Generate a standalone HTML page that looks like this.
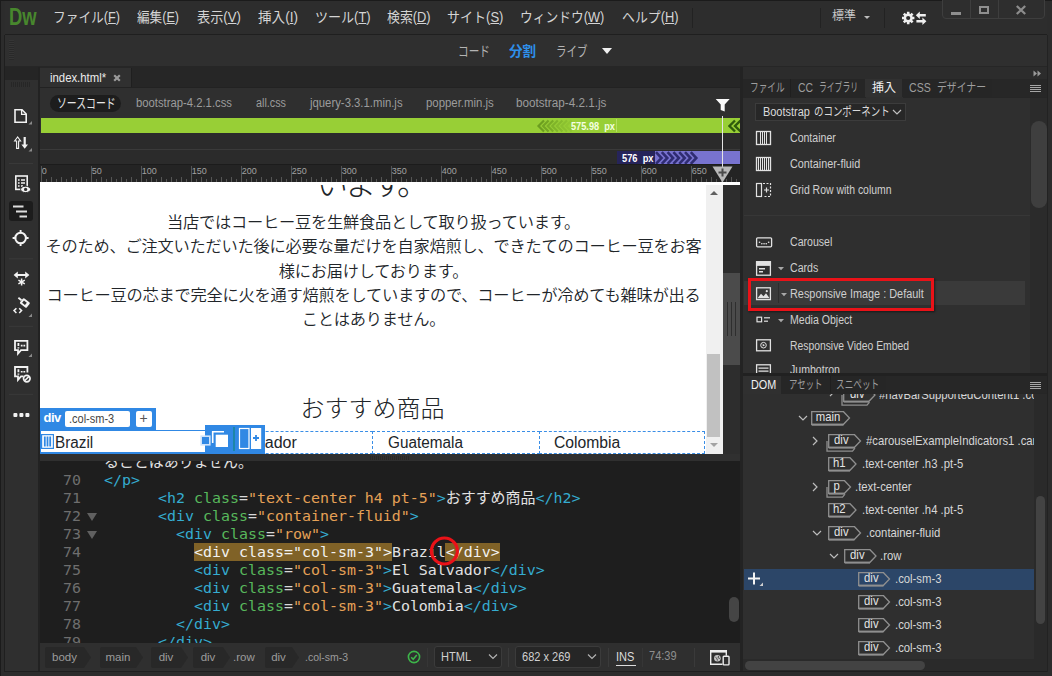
<!DOCTYPE html>
<html lang="ja">
<head>
<meta charset="utf-8">
<title>Dreamweaver</title>
<style>
*{box-sizing:border-box;margin:0;padding:0}
html,body{width:1052px;height:676px;overflow:hidden;background:#2c2c2c}
body{position:relative;font-family:"Liberation Sans","Noto Sans CJK JP",sans-serif;font-size:12px;color:#c8c8c8}
.a{position:absolute}
.t{position:absolute;white-space:nowrap;line-height:1}
.n{display:inline-block;transform-origin:0 50%}
/* ---------- frame ---------- */
#frame{left:0;top:0;width:1052px;height:676px;border-left:1px solid #1b1b1b;border-top:1px solid #1b1b1b;background:#2c2c2c}
#menubar{left:5px;top:1px;width:1042px;height:33px;background:#2d2d2d}
#toolbar{left:5px;top:35px;width:1042px;height:32px;background:#2f2f2f}
/* ---------- left toolbar ---------- */
#ltool{left:5px;top:67px;width:33px;height:604px;background:#2f2f2f}
/* ---------- document ---------- */
#doc{left:40px;top:67px;width:700px;height:604px;background:#2f2f2f}
/* ---------- right panels ---------- */
#rpanel{left:743px;top:67px;width:304px;height:604px;background:#2f2f2f}
.mi{top:10px;font-size:14px;color:#d4d4d4}
.rf{top:97px;font-size:12px;color:#9c9c9c}
.ins{font-size:12px;color:#cfcfcf}
.code{font-family:"DejaVu Sans Mono","Liberation Mono","Noto Sans CJK JP",monospace;font-size:14.95px;line-height:18px;white-space:pre;color:#dcdcdc}
.ln{color:#6e6e6e}
.tg{color:#35acd0}.at{color:#58b85c}.st{color:#e6a156}.eq{color:#d8d8d8}.tx{color:#e2e2e2}
.hl{background:#806227;color:#f2f2f2}
.hl span{color:#f2f2f2}
.lv{color:#212529;font-family:"Liberation Sans","Noto Sans CJK JP",sans-serif}
.sb{font-size:11.500px;color:#9c9c9c}
.dt{font-size:13px;color:#e4e4e4}
.dc{font-size:13px;color:#d6d6d6}
</style>
</head>
<body>
<div class="a" id="frame"></div>
<div class="a" id="menubar"></div>
<div class="a" id="toolbar"></div>

<!-- ===== menu bar ===== -->
<div class="t" style="left:9px;top:6px;font-size:23px;font-weight:bold;color:#48872d"><span class="n" style="transform:scaleX(.80)">Dw</span></div>
<div class="t mi" style="left:53px"><span class="n" style="transform:scaleX(.907)">ファイル(<u>F</u>)</span></div>
<div class="t mi" style="left:137px"><span class="n" style="transform:scaleX(.90)">編集(<u>E</u>)</span></div>
<div class="t mi" style="left:197px"><span class="n" style="transform:scaleX(.94)">表示(<u>V</u>)</span></div>
<div class="t mi" style="left:258px"><span class="n" style="transform:scaleX(.97)">挿入(<u>I</u>)</span></div>
<div class="t mi" style="left:315px"><span class="n" style="transform:scaleX(.93)">ツール(<u>T</u>)</span></div>
<div class="t mi" style="left:387px"><span class="n" style="transform:scaleX(.92)">検索(<u>D</u>)</span></div>
<div class="t mi" style="left:447px"><span class="n" style="transform:scaleX(.93)">サイト(<u>S</u>)</span></div>
<div class="t mi" style="left:520px"><span class="n" style="transform:scaleX(.91)">ウィンドウ(<u>W</u>)</span></div>
<div class="t mi" style="left:622px"><span class="n" style="transform:scaleX(.92)">ヘルプ(<u>H</u>)</span></div>
<div class="a" style="left:692px;top:8px;width:1px;height:20px;background:#222"></div>
<div class="a" style="left:820px;top:8px;width:1px;height:20px;background:#222"></div>
<div class="a" style="left:884px;top:8px;width:1px;height:20px;background:#222"></div>
<div class="t" style="left:832px;top:10px;font-size:12px;color:#c8c8c8">標準</div>
<div class="a" style="left:864px;top:16px;width:0;height:0;border-left:3px solid transparent;border-right:3px solid transparent;border-top:3px solid #bdbdbd"></div>
<svg class="a" style="left:900px;top:10px" width="28" height="16" viewBox="0 0 28 16">
 <g stroke="#efefef" stroke-width="2.600"><path d="M8.200 1.800v12.400M2 8h12.400M3.800 3.600l8.800 8.800M12.600 3.600l-8.800 8.800"/></g>
 <circle cx="8.200" cy="8" r="4.500" fill="#efefef"/>
 <circle cx="8.200" cy="8" r="2.100" fill="#2d2d2d"/>
 <path d="M15.800 5.200l4-3.700v2.500h6v2.400h-6v2.500z" fill="#efefef"/>
 <path d="M26.400 11.200l-4-3.700v2.500h-6v2.400h6v2.500z" fill="#efefef"/>
</svg>
<!-- window buttons -->
<div class="a" style="left:942px;top:-2px;width:103px;height:21px;border:1px solid #3e3e3e;border-radius:0 0 4px 4px;background:#2e2e2e"></div>
<div class="a" style="left:970px;top:0;width:1px;height:18px;background:#3e3e3e"></div>
<div class="a" style="left:998px;top:0;width:1px;height:18px;background:#3e3e3e"></div>
<div class="a" style="left:951px;top:12px;width:10px;height:3px;background:#8f8f8f"></div>
<div class="a" style="left:979px;top:6px;width:10px;height:8px;border:2px solid #8f8f8f"></div>
<svg class="a" style="left:1015px;top:5px" width="12" height="10" viewBox="0 0 12 10"><path d="M1.800 1l8.400 8M10.200 1l-8.400 8" stroke="#8c8c8c" stroke-width="2.300" fill="none"/></svg>
<div class="a" style="left:5px;top:34px;width:1042px;height:1px;background:#1f1f1f"></div>
<!-- ===== toolbar ===== -->
<div class="a" style="left:5px;top:66px;width:1042px;height:1px;background:#262626"></div>
<div class="a" style="left:9px;top:40px;width:5px;height:20px;background:repeating-linear-gradient(to bottom,#353535 0 1px,#292929 1px 2px)"></div>
<div class="t" style="left:458px;top:43.500px;font-size:14px;color:#b4b4b4"><span class="n" style="transform:scaleX(.76)">コード</span></div>
<div class="t" style="left:509px;top:43.500px;font-size:14px;color:#2e8fea;font-weight:bold"><span class="n" style="transform:scaleX(.97)">分割</span></div>
<div class="t" style="left:556px;top:43.500px;font-size:14px;color:#b4b4b4"><span class="n" style="transform:scaleX(.75)">ライブ</span></div>
<div class="a" style="left:602px;top:48px;width:0;height:0;border-left:5px solid transparent;border-right:5px solid transparent;border-top:6px solid #f0f0f0"></div>
<div class="a" id="ltool"></div>

<!-- ===== left toolbar ===== -->
<div class="a" style="left:5px;top:67px;width:33px;height:13px;background:#252525"></div>
<div class="a" style="left:38px;top:67px;width:2px;height:604px;background:#222"></div>
<div class="a" style="left:4px;top:35px;width:1px;height:637px;background:#1f1f1f"></div>
<div class="a" style="left:11px;top:82px;width:20px;height:5px;background:repeating-linear-gradient(to right,#262626 0 1px,#2f2f2f 1px 2px)"></div>
<svg class="a" style="left:5px;top:100px" width="33" height="330" viewBox="0 0 33 330" fill="none" stroke="#f2f2f2" stroke-width="1.6">
 <!-- new file y 109..122 => local 9..22 -->
 <path d="M10 9.8h7l4.2 4.2v8.2H10z"/><path d="M16.6 9.8v4.6h4.6" stroke-width="1.3"/>
 <path d="M27 24.5v-3.5l-3.5 3.5z" fill="#8a8a8a" stroke="none"/>
 <!-- up/down arrows y 136..149 => local 36..49 -->
 <path d="M12.6 37l-3 4h2v7.4h2V41h2z" stroke-width="1.1"/>
 <path d="M18.6 37h2.2v7.5h2.2l-3.3 4.3l-3.3-4.3h2.2z" fill="#f2f2f2" stroke="none"/>
 <path d="M27 51.5v-3.5l-3.5 3.5z" fill="#8a8a8a" stroke="none"/>
 <path d="M4 63.5h24" stroke="#393939" stroke-width="1"/>
 <!-- preview icon y 175..192 => local 75..92 -->
 <rect x="10.8" y="76" width="11.4" height="13.4"/>
 <path d="M13 80h1.6M16 80h4M13 83h1.6M16 83h4M13 86h1.6M16 86h2" stroke-width="1.3"/>
 <ellipse cx="20.6" cy="89.4" rx="5" ry="3.2" fill="#f2f2f2" stroke="#2f2f2f" stroke-width="1"/>
 <circle cx="20.6" cy="89.4" r="1.6" fill="#2f2f2f" stroke="none"/>
 <!-- active button y 201..221 => local 101..121 -->
 <rect x="4" y="101" width="24" height="20" rx="3" fill="#1c1c1c" stroke="none"/>
 <path d="M8 106.500h10.500M11 111.500h11M14.500 116.500h7.500" stroke-width="1.900" stroke="#dedede"/>
 <!-- crosshair y 231..245 => 131..145, centre 15.5,138 -->
 <circle cx="15.600" cy="138" r="5.300" stroke-width="2"/>
 <path d="M15.600 130v3.600M15.600 142.400v3.600M7.600 138h3.600M20 138h3.600" stroke-width="1.900"/>
 <path d="M4 158.8h24" stroke="#393939" stroke-width="1"/>
 <!-- expand all y 271..285 => 171..185 -->
 <path d="M11 175h11" stroke-width="2"/><path d="M12.800 171.400l-4.200 3.600l4.200 3.600zM20.200 171.400l4.200 3.600l-4.200 3.600z" fill="#f2f2f2" stroke="none"/>
 <path d="M16.600 178.400v7.200M13.400 180.200l6.400 3.600M19.800 180.200l-6.400 3.600" stroke-width="1.500"/>
 <!-- format / paint y 298..314 => 198..214 -->
 <g transform="rotate(38 20 203)"><rect x="15.600" y="199.800" width="8.600" height="6.600" rx="1.200" fill="#f2f2f2" stroke="none"/><rect x="17.600" y="201.600" width="3.600" height="3" fill="#2f2f2f" stroke="none"/><path d="M15.600 203h-4" stroke-width="1.800"/></g>
 <path d="M11.400 208.200l-2.400 2.400l2.400 2.400M14.200 208.200l2.400 2.400l-2.400 2.400" stroke-width="1.500"/>
 <path d="M27 217v-3.500l-3.500 3.500z" fill="#8a8a8a" stroke="none"/>
 <path d="M4 226.400h24" stroke="#393939" stroke-width="1"/>
 <!-- comment y 340..354 => 240..254 -->
 <path d="M10 240.800h12.400v9.400h-6.400l-3 3.400v-3.400h-3z" stroke-width="1.800"/>
 <path d="M13.400 243v3M13.400 247.200v1.400" stroke-width="1.800"/><path d="M15.800 245.600h1.800M18.400 245.600h1.800" stroke-width="1.600"/>
 <path d="M27 257v-3.500l-3.500 3.500z" fill="#8a8a8a" stroke="none"/>
 <!-- comment blocked y 367..382 => 267..282 -->
 <path d="M18.500 276.400h-2.500l-3 3.400v-3.400h-3v-9.400h12.400v5.500" stroke-width="1.800"/>
 <path d="M13.400 269.200v3M13.400 273.400v1.400" stroke-width="1.800"/><path d="M15.800 271.800h1.800M18.400 271.800h1.800" stroke-width="1.600"/>
 <circle cx="21.800" cy="278.600" r="3.300" stroke-width="1.700" fill="#2f2f2f"/><path d="M19.600 280.800l4.400-4.400" stroke-width="1.600"/>
 <path d="M4 294.400h24" stroke="#393939" stroke-width="1"/>
 <!-- ellipsis y 413..417 -->
 <rect x="8.400" y="313" width="4" height="4" rx="1" fill="#f2f2f2" stroke="none"/><rect x="14.400" y="313" width="4" height="4" rx="1" fill="#f2f2f2" stroke="none"/><rect x="20.400" y="313" width="4" height="4" rx="1" fill="#f2f2f2" stroke="none"/>
</svg>
<div class="a" id="doc"></div>

<!-- ===== document tabs ===== -->
<div class="a" style="left:40px;top:67px;width:700px;height:21px;background:#262626"></div>
<div class="a" style="left:40px;top:68px;width:92px;height:19px;background:#303030;border-right:1px solid #1f1f1f"></div>
<div class="a" style="left:40px;top:87px;width:700px;height:1px;background:#222"></div>
<div class="t" style="left:50px;top:72px;font-size:12px;color:#ececec"><span class="n" style="transform:scaleX(.945)">index.html*</span></div>
<svg class="a" style="left:113px;top:74px" width="8" height="8" viewBox="0 0 8 8"><path d="M1.200 1.200l5.600 5.600M6.800 1.200l-5.600 5.600" stroke="#9a9a9a" stroke-width="2.200"/></svg>
<!-- related files -->
<div class="a" style="left:50px;top:95px;width:71px;height:17px;border-radius:9px;background:#1d1d1d"></div>
<div class="t" style="left:56.500px;top:96.500px;font-size:13.500px;color:#e6e6e6"><span class="n" style="transform:scaleX(.73)">ソースコード</span></div>
<div class="t rf" style="left:136px"><span class="n" style="transform:scaleX(.94)">bootstrap-4.2.1.css</span></div>
<div class="t rf" style="left:256px"><span class="n" style="transform:scaleX(.90)">all.css</span></div>
<div class="t rf" style="left:310px"><span class="n" style="transform:scaleX(.944)">jquery-3.3.1.min.js</span></div>
<div class="t rf" style="left:426px"><span class="n" style="transform:scaleX(.95)">popper.min.js</span></div>
<div class="t rf" style="left:516px"><span class="n" style="transform:scaleX(.975)">bootstrap-4.2.1.js</span></div>
<svg class="a" style="left:714px;top:97px" width="18" height="16" viewBox="0 0 18 16"><path d="M1.700 2h14l-5 5.400v7.200l-4-1.500v-5.700z" fill="#fafafa"/></svg>
<!-- media query bars -->
<div class="a" style="left:41px;top:118px;width:699px;height:15px;background:#98cf36"></div>
<svg class="a" style="left:536px;top:119px" width="40" height="14" viewBox="0 0 40 14" fill="none" stroke="#6c9e20" stroke-width="2.200"><path d="M8.0 1.500l-5.500 5.500l5.500 5.500" opacity="1"/><path d="M12.6 1.500l-5.500 5.500l5.500 5.500" opacity="0.85"/><path d="M17.2 1.500l-5.500 5.500l5.500 5.500" opacity="0.7"/><path d="M21.8 1.500l-5.500 5.500l5.500 5.500" opacity="0.55"/><path d="M26.4 1.500l-5.500 5.500l5.500 5.500" opacity="0.4"/><path d="M31.0 1.500l-5.500 5.500l5.500 5.500" opacity="0.28"/><path d="M35.6 1.500l-5.500 5.500l5.500 5.500" opacity="0.16"/></svg>
<div class="t" style="left:571px;top:121px;font-size:10.500px;color:#f4ffe0;font-weight:bold"><span class="n" style="transform:scaleX(.875)">575.98&nbsp; px</span></div>
<div class="a" style="left:616px;top:119px;width:1px;height:13px;background:#b4de62"></div>
<svg class="a" style="left:728px;top:119px" width="12" height="14" viewBox="0 0 12 14" fill="none" stroke="#2f5c0c" stroke-width="2.400"><path d="M7 1.500l-5.500 5.500l5.500 5.500M12.500 1.500l-5.500 5.500l5.500 5.500"/></svg>
<div class="a" style="left:40px;top:133px;width:700px;height:17px;background:#2b2b2b"></div>
<div class="a" style="left:40px;top:149px;width:700px;height:1px;background:#3a3a3a"></div>
<div class="a" style="left:40px;top:150px;width:700px;height:15px;background:#2b2b2b"></div>
<div class="a" style="left:617px;top:151px;width:123px;height:14px;background:#7873cf"></div>
<div class="a" style="left:617px;top:151px;width:38px;height:14px;background:#26245a"></div>
<svg class="a" style="left:655px;top:151px" width="50" height="14" viewBox="0 0 50 14" fill="none" stroke="#2f2c72" stroke-width="2.600"><path d="M1.0 1.200l5.500 5.800l-5.500 5.800" /><path d="M6.8 1.200l5.500 5.800l-5.500 5.800" /><path d="M12.6 1.200l5.500 5.800l-5.500 5.800" /><path d="M18.4 1.200l5.500 5.800l-5.500 5.800" /><path d="M24.2 1.200l5.500 5.800l-5.500 5.800" /><path d="M30.0 1.200l5.500 5.800l-5.500 5.800" /><path d="M35.8 1.200l5.500 5.800l-5.500 5.800" /></svg>
<div class="t" style="left:622px;top:153px;font-size:10.500px;color:#ffffff;font-weight:bold"><span class="n" style="transform:scaleX(.885)">576&nbsp; px</span></div>
<!-- ruler -->
<svg class="a" style="left:40px;top:165px" width="700" height="17" viewBox="0 0 700 17"><rect width="700" height="17" fill="#242424"/><path d="M1.5 1v16M6.5 14v3M11.5 12v5M16.5 14v3M21.5 12v5M26.5 14v3M31.5 12v5M36.5 14v3M41.5 12v5M46.5 14v3M51.5 1v16M56.5 14v3M61.5 12v5M66.5 14v3M71.5 12v5M76.5 14v3M81.5 12v5M86.5 14v3M91.5 12v5M96.5 14v3M101.5 1v16M106.5 14v3M111.5 12v5M116.5 14v3M121.5 12v5M126.5 14v3M131.5 12v5M136.5 14v3M141.5 12v5M146.5 14v3M151.5 1v16M156.5 14v3M161.5 12v5M166.5 14v3M171.5 12v5M176.5 14v3M181.5 12v5M186.5 14v3M191.5 12v5M196.5 14v3M201.5 1v16M206.5 14v3M211.5 12v5M216.5 14v3M221.5 12v5M226.5 14v3M231.5 12v5M236.5 14v3M241.5 12v5M246.5 14v3M251.5 1v16M256.5 14v3M261.5 12v5M266.5 14v3M271.5 12v5M276.5 14v3M281.5 12v5M286.5 14v3M291.5 12v5M296.5 14v3M301.5 1v16M306.5 14v3M311.5 12v5M316.5 14v3M321.5 12v5M326.5 14v3M331.5 12v5M336.5 14v3M341.5 12v5M346.5 14v3M351.5 1v16M356.5 14v3M361.5 12v5M366.5 14v3M371.5 12v5M376.5 14v3M381.5 12v5M386.5 14v3M391.5 12v5M396.5 14v3M401.5 1v16M406.5 14v3M411.5 12v5M416.5 14v3M421.5 12v5M426.5 14v3M431.5 12v5M436.5 14v3M441.5 12v5M446.5 14v3M451.5 1v16M456.5 14v3M461.5 12v5M466.5 14v3M471.5 12v5M476.5 14v3M481.5 12v5M486.5 14v3M491.5 12v5M496.5 14v3M501.5 1v16M506.5 14v3M511.5 12v5M516.5 14v3M521.5 12v5M526.5 14v3M531.5 12v5M536.5 14v3M541.5 12v5M546.5 14v3M551.5 1v16M556.5 14v3M561.5 12v5M566.5 14v3M571.5 12v5M576.5 14v3M581.5 12v5M586.5 14v3M591.5 12v5M596.5 14v3M601.5 1v16M606.5 14v3M611.5 12v5M616.5 14v3M621.5 12v5M626.5 14v3M631.5 12v5M636.5 14v3M641.5 12v5M646.5 14v3M651.5 1v16M656.5 14v3M661.5 12v5M666.5 14v3M671.5 12v5M676.5 14v3M681.5 12v5M686.5 14v3M691.5 12v5M696.5 14v3" stroke="#555555" stroke-width="1" fill="none"/><g font-family="Liberation Sans, sans-serif" font-size="9" fill="#a2a2a2"><text x="1.8" y="9.2">0</text><text x="51.8" y="9.2">50</text><text x="101.8" y="9.2">100</text><text x="151.8" y="9.2">150</text><text x="201.8" y="9.2">200</text><text x="251.8" y="9.2">250</text><text x="301.8" y="9.2">300</text><text x="351.8" y="9.2">350</text><text x="401.8" y="9.2">400</text><text x="451.8" y="9.2">450</text><text x="501.8" y="9.2">500</text><text x="551.8" y="9.2">550</text><text x="601.8" y="9.2">600</text><text x="651.8" y="9.2">650</text></g></svg>
<div class="a" style="left:40px;top:164px;width:700px;height:1px;background:#1c1c1c"></div>
<div class="a" style="left:722px;top:116px;width:1px;height:66px;background:#e4e4e4"></div>
<svg class="a" style="left:712px;top:166px" width="21" height="17" viewBox="0 0 21 17"><path d="M0.500 0.500h20l-10 16z" fill="#b9b9b9"/><path d="M10.500 2.500v8M6.500 6.500h8" stroke="#4a4a4a" stroke-width="2"/></svg>

<!-- ===== live view ===== -->
<div class="a" style="left:40px;top:182px;width:700px;height:3px;background:#fff"></div>
<div class="a" id="live" style="left:40px;top:182px;width:683px;height:272px;background:#fff;overflow:hidden"></div>
<div class="a" style="left:40px;top:185px;width:666px;height:40px;overflow:hidden"><div class="t lv" style="left:-2px;width:665px;top:-17px;font-size:32px;font-weight:300;letter-spacing:-4px;text-align:center">います。</div></div>
<div class="t lv" style="left:41px;width:665px;top:214.4px;font-size:16.250px;font-weight:350;letter-spacing:-.25px;text-align:center">当店ではコーヒー豆を生鮮食品として取り扱っています。</div>
<div class="t lv" style="left:41px;width:665px;top:238.4px;font-size:16.250px;font-weight:350;letter-spacing:-.25px;text-align:center">そのため、ご注文いただいた後に必要な量だけを自家焙煎し、できたてのコーヒー豆をお客</div>
<div class="t lv" style="left:41px;width:665px;top:263.4px;font-size:16.250px;font-weight:350;letter-spacing:-.25px;text-align:center">様にお届けしております。</div>
<div class="t lv" style="left:41px;width:665px;top:287.4px;font-size:16.250px;font-weight:350;letter-spacing:-.25px;text-align:center">コーヒー豆の芯まで完全に火を通す焙煎をしていますので、コーヒーが冷めても雑味が出る</div>
<div class="t lv" style="left:41px;width:665px;top:311.4px;font-size:16.250px;font-weight:350;letter-spacing:-.25px;text-align:center">ことはありません。</div>
<div class="t lv" style="left:40px;width:665px;top:397px;font-size:24px;font-weight:300;text-align:center">おすすめ商品</div>
<!-- row cells -->
<div class="a" style="left:206px;top:431px;width:167px;height:23px;border:1px dashed #3a8ee6"></div>
<div class="a" style="left:372px;top:431px;width:168px;height:23px;border:1px dashed #3a8ee6"></div>
<div class="a" style="left:539px;top:431px;width:166px;height:23px;border:1px dashed #3a8ee6"></div>
<div class="a" style="left:40px;top:430px;width:167px;height:24px;border:1px solid #3088e4;border-bottom-width:2px"></div>
<div class="t lv" style="left:55px;top:435px;font-size:16px"><span class="n" style="transform:scaleX(.955)">Brazil</span></div>
<div class="t lv" style="left:215px;top:435px;font-size:16px"><span class="n" style="transform:scaleX(1)">El Salvador</span></div>
<div class="t lv" style="left:388px;top:435px;font-size:16px"><span class="n" style="transform:scaleX(.957)">Guatemala</span></div>
<div class="t lv" style="left:554px;top:435px;font-size:16px"><span class="n" style="transform:scaleX(.98)">Colombia</span></div>
<svg class="a" style="left:41px;top:434px" width="13" height="15" viewBox="0 0 13 15" fill="none" stroke="#3088e4" stroke-width="1.200"><rect x=".6" y=".6" width="11.800" height="13.800"/><path d="M3.800 2.500v10M6.500 2.500v10M9.200 2.500v10" stroke-width="1.800"/></svg>
<!-- element display -->
<div class="a" style="left:40px;top:408px;width:116px;height:23px;background:#3088e4"></div>
<div class="t" style="left:43.500px;top:411px;font-size:13px;font-weight:bold;color:#fff;letter-spacing:-.5px">div</div>
<div class="a" style="left:65px;top:411px;width:65px;height:16px;background:#fff;border-radius:2px"></div>
<div class="t" style="left:68.500px;top:413px;font-size:12.500px;color:#444"><span class="n" style="transform:scaleX(.88)">.col-sm-3</span></div>
<div class="a" style="left:136px;top:411px;width:16px;height:16px;background:#fff;border-radius:2px"></div>
<div class="t" style="left:139.500px;top:411px;font-size:14px;color:#555">+</div>
<div class="a" style="left:205px;top:425px;width:60px;height:29px;background:#3088e4"></div>
<svg class="a" style="left:198px;top:425px" width="67" height="29" viewBox="0 0 67 29">
 <rect x="3.200" y="11.200" width="8.600" height="8.600" fill="#3088e4" stroke="#cfe3fa" stroke-width="1.600"/>
 <path d="M14.700 18v-11.300h11.300" fill="none" stroke="#fff" stroke-width="1.600"/>
 <rect x="17.700" y="9.700" width="12.300" height="12.300" fill="#fff"/>
 <path d="M36 2v24" stroke="#1c86a8" stroke-width="2"/>
 <rect x="41.500" y="3.500" width="9.500" height="20" fill="#3088e4" stroke="#fff" stroke-width="1.200"/>
 <rect x="53" y="3" width="10.200" height="21" fill="#fff"/>
 <path d="M58 10v6M55 13h6" stroke="#3088e4" stroke-width="1.800"/>
</svg>
<!-- live scrollbar -->
<div class="a" style="left:706px;top:185px;width:17px;height:269px;background:#f0f0f0"></div>
<div class="a" style="left:710px;top:191px;width:0;height:0;border-left:4px solid transparent;border-right:4px solid transparent;border-bottom:4px solid #606060"></div>
<div class="a" style="left:710px;top:443px;width:0;height:0;border-left:4px solid transparent;border-right:4px solid transparent;border-top:4px solid #a3a3a3"></div>
<div class="a" style="left:707px;top:353.500px;width:13px;height:83px;background:#c1c1c1"></div>
<!-- splitter strip -->
<div class="a" style="left:723px;top:185px;width:17px;height:269px;background:#2d2d2d"></div>
<div class="a" style="left:723px;top:272.500px;width:16.500px;height:92px;background:#4b4b4b"></div>
<div class="a" style="left:727px;top:302px;width:9px;height:34px;background:repeating-linear-gradient(to right,#2e2e2e 0 1px,#4b4b4b 1px 4px)"></div>
<div class="a" style="left:40px;top:454px;width:700px;height:7px;background:#303030"></div>
<div class="a" style="left:370px;top:456px;width:40px;height:4px;background:repeating-linear-gradient(to right,#272727 0 1px,#303030 1px 2px)"></div>

<!-- ===== code view ===== -->
<div class="a" id="code" style="left:40px;top:461px;width:700px;height:182px;background:#1e1e1e;overflow:hidden"></div>
<div class="a" style="left:40px;top:461px;width:700px;height:182px;overflow:hidden"><div class="a" style="left:-40px;top:-461px;width:1052px;height:676px">
<div class="t code" style="left:104px;top:453px"><span class="tx">ることはありません。</span></div>
<div class="t code ln" style="left:58px;width:23px;top:471px;text-align:right">70</div><div class="t code" style="left:104px;top:471px"><span class="tg">&lt;/p&gt;</span></div>
<div class="t code ln" style="left:58px;width:23px;top:489px;text-align:right">71</div><div class="t code" style="left:158px;top:489px"><span class="tg">&lt;h2</span> <span class="at">class</span><span class="eq">=</span><span class="st">"text-center h4 pt-5"</span><span class="tg">&gt;</span><span class="tx">おすすめ商品</span><span class="tg">&lt;/h2&gt;</span></div>
<div class="t code ln" style="left:58px;width:23px;top:507px;text-align:right">72</div><div class="a" style="left:87px;top:513px;width:0;height:0;border-left:5px solid transparent;border-right:5px solid transparent;border-top:8px solid #606060"></div><div class="t code" style="left:158px;top:507px"><span class="tg">&lt;div</span> <span class="at">class</span><span class="eq">=</span><span class="st">"container-fluid"</span><span class="tg">&gt;</span></div>
<div class="t code ln" style="left:58px;width:23px;top:525px;text-align:right">73</div><div class="a" style="left:87px;top:531px;width:0;height:0;border-left:5px solid transparent;border-right:5px solid transparent;border-top:8px solid #606060"></div><div class="t code" style="left:176px;top:525px"><span class="tg">&lt;div</span> <span class="at">class</span><span class="eq">=</span><span class="st">"row"</span><span class="tg">&gt;</span></div>
<div class="a hl" style="left:194px;top:542.500px;width:198px;height:18.500px"></div>
<div class="a hl" style="left:445px;top:542.500px;width:54px;height:18.500px"></div>
<div class="t code ln" style="left:58px;width:23px;top:543px;text-align:right">74</div><div class="t code" style="left:194px;top:543px"><span class="hl"><span class="tg">&lt;div</span> <span class="at">class</span><span class="eq">=</span><span class="st">"col-sm-3"</span><span class="tg">&gt;</span></span><span class="tx">Brazil</span><span class="hl"><span class="tg">&lt;/div&gt;</span></span></div>
<div class="t code ln" style="left:58px;width:23px;top:561px;text-align:right">75</div><div class="t code" style="left:194px;top:561px"><span class="tg">&lt;div</span> <span class="at">class</span><span class="eq">=</span><span class="st">"col-sm-3"</span><span class="tg">&gt;</span><span class="tx">El Salvador</span><span class="tg">&lt;/div&gt;</span></div>
<div class="t code ln" style="left:58px;width:23px;top:579px;text-align:right">76</div><div class="t code" style="left:194px;top:579px"><span class="tg">&lt;div</span> <span class="at">class</span><span class="eq">=</span><span class="st">"col-sm-3"</span><span class="tg">&gt;</span><span class="tx">Guatemala</span><span class="tg">&lt;/div&gt;</span></div>
<div class="t code ln" style="left:58px;width:23px;top:597px;text-align:right">77</div><div class="t code" style="left:194px;top:597px"><span class="tg">&lt;div</span> <span class="at">class</span><span class="eq">=</span><span class="st">"col-sm-3"</span><span class="tg">&gt;</span><span class="tx">Colombia</span><span class="tg">&lt;/div&gt;</span></div>
<div class="t code ln" style="left:58px;width:23px;top:615px;text-align:right">78</div><div class="t code" style="left:176px;top:615px"><span class="tg">&lt;/div&gt;</span></div>
<div class="t code ln" style="left:58px;width:23px;top:633px;text-align:right">79</div><div class="t code" style="left:158px;top:633px"><span class="tg">&lt;/div&gt;</span></div>
</div></div>
<svg class="a" style="left:427px;top:534px" width="36" height="36" viewBox="0 0 36 36"><circle cx="17.400" cy="17" r="13" fill="none" stroke="#ea1218" stroke-width="3.200"/></svg>
<div class="a" style="left:728px;top:461px;width:12px;height:182px;background:#1e1e1e"></div>
<div class="a" style="left:729px;top:597px;width:10px;height:25px;border-radius:5px;background:#454545"></div>

<!-- ===== status bar ===== -->
<div class="a" style="left:40px;top:643px;width:700px;height:28px;background:#2f2f2f"></div>
<svg class="a" style="left:45px;top:647px" width="47" height="21" viewBox="0 0 47 21"><path d="M2 0h37l7 10.500l-7 10.500h-37a2 2 0 0 1 -2 -2v-17a2 2 0 0 1 2 -2z" fill="#282828"/></svg><div class="t sb" style="left:45px;width:39px;top:651.500px;text-align:center">body</div>
<svg class="a" style="left:100px;top:647px" width="44" height="21" viewBox="0 0 44 21"><path d="M2 0h34l7 10.500l-7 10.500h-34a2 2 0 0 1 -2 -2v-17a2 2 0 0 1 2 -2z" fill="#282828"/></svg><div class="t sb" style="left:100px;width:36px;top:651.500px;text-align:center">main</div>
<svg class="a" style="left:151px;top:647px" width="38" height="21" viewBox="0 0 38 21"><path d="M2 0h28l7 10.500l-7 10.500h-28a2 2 0 0 1 -2 -2v-17a2 2 0 0 1 2 -2z" fill="#282828"/></svg><div class="t sb" style="left:151px;width:30px;top:651.500px;text-align:center">div</div>
<svg class="a" style="left:193px;top:647px" width="38" height="21" viewBox="0 0 38 21"><path d="M2 0h28l7 10.500l-7 10.500h-28a2 2 0 0 1 -2 -2v-17a2 2 0 0 1 2 -2z" fill="#282828"/></svg><div class="t sb" style="left:193px;width:30px;top:651.500px;text-align:center">div</div>
<div class="t sb" style="left:233px;top:651.500px">.row</div>
<svg class="a" style="left:265px;top:647px" width="35" height="21" viewBox="0 0 35 21"><path d="M2 0h25l7 10.500l-7 10.500h-25a2 2 0 0 1 -2 -2v-17a2 2 0 0 1 2 -2z" fill="#282828"/></svg><div class="t sb" style="left:265px;width:27px;top:651.500px;text-align:center">div</div>
<div class="t sb" style="left:305px;top:651.500px"><span class="n" style="transform:scaleX(.91)">.col-sm-3</span></div>
<svg class="a" style="left:407px;top:650px" width="14" height="14" viewBox="0 0 14 14"><circle cx="7" cy="7" r="5.600" fill="none" stroke="#3db54a" stroke-width="1.600"/><path d="M4.200 7.200l2 2l3.600-4.200" fill="none" stroke="#3db54a" stroke-width="1.600"/></svg>
<div class="a" style="left:434px;top:646px;width:68px;height:22px;background:#262626;border:1px solid #3b3b3b;border-radius:3px"></div>
<div class="t" style="left:441px;top:651px;font-size:12px;color:#d0d0d0"><span class="n" style="transform:scaleX(.92)">HTML</span></div>
<svg class="a" style="left:488px;top:653px" width="10" height="7" viewBox="0 0 10 7"><path d="M1 1.500l4 4l4-4" fill="none" stroke="#b4b4b4" stroke-width="1.150"/></svg>
<div class="a" style="left:508px;top:648px;width:1px;height:19px;background:#3a3a3a"></div><div class="a" style="left:427px;top:648px;width:1px;height:19px;background:#363636"></div>
<div class="a" style="left:515px;top:646px;width:86px;height:22px;background:#262626;border:1px solid #3b3b3b;border-radius:3px"></div>
<div class="t" style="left:522px;top:651px;font-size:12px;color:#d0d0d0"><span class="n" style="transform:scaleX(.92)">682 x 269</span></div>
<svg class="a" style="left:587px;top:653px" width="10" height="7" viewBox="0 0 10 7"><path d="M1 1.500l4 4l4-4" fill="none" stroke="#b4b4b4" stroke-width="1.150"/></svg>
<div class="a" style="left:608px;top:648px;width:1px;height:19px;background:#3a3a3a"></div>
<div class="t" style="left:616px;top:651px;font-size:12px;color:#dcdcdc;border-bottom:1px solid #dcdcdc;padding-bottom:2px"><span class="n" style="transform:scaleX(.92)">INS</span></div>
<div class="t" style="left:649px;top:650px;font-size:12px;color:#8e8e8e"><span class="n" style="transform:scaleX(.92)">74:39</span></div>
<div class="a" style="left:694px;top:648px;width:1px;height:19px;background:#3a3a3a"></div><div class="a" style="left:642px;top:648px;width:1px;height:19px;background:#363636"></div>
<svg class="a" style="left:708px;top:648px" width="23" height="19" viewBox="0 0 23 19" fill="none" stroke="#ececec" stroke-width="1.400"><path d="M14.500 16.300h-11.800v-13.600h15.600v5"/><path d="M2.700 3.600h15.600" stroke-width="2"/><circle cx="9.400" cy="10.200" r="3.300" fill="#c4c4c4" stroke="none"/><path d="M7.400 9.200l1.600 1.400l.4 2M10.600 8l-.6 1.600l1.800 1" stroke="#2f2f2f" stroke-width=".8"/><rect x="15.200" y="8.300" width="5.800" height="8.600" rx=".8" fill="#2f2f2f"/></svg>
<!-- bottom frame -->
<div class="a" style="left:4px;top:671px;width:1044px;height:1px;background:#1f1f1f"></div>
<div class="a" id="rpanel"></div>
<!-- ===== right: insert panel ===== -->
<div class="a" style="left:740px;top:67px;width:3px;height:604px;background:#232323"></div>
<div class="a" style="left:743px;top:67px;width:304px;height:12px;background:#2c2c2c"></div>
<svg class="a" style="left:1033px;top:70px" width="9" height="7" viewBox="0 0 9 7"><path d="M.500 .500l3.500 3l-3.500 3zM4.500 .500l3.500 3l-3.500 3z" fill="#9a9a9a"/></svg>
<div class="a" style="left:743px;top:79px;width:304px;height:18px;background:#272727"></div><div class="a" style="left:743px;top:79px;width:249px;height:19px;background:#262626"></div>
<div class="a" style="left:790px;top:79px;width:1px;height:18px;background:#1f1f1f"></div><div class="a" style="left:865px;top:79px;width:37px;height:19px;background:#313131"></div>
<div class="a" style="left:743px;top:97px;width:304px;height:1px;background:#262626"></div>
<div class="a" style="left:866px;top:97px;width:37px;height:1px;background:#2f2f2f"></div>
<div class="t" style="left:750px;top:82px;font-size:12px;color:#9e9e9e"><span class="n" style="transform:scaleX(.72)">ファイル</span></div>
<div class="t" style="left:798px;top:82px;font-size:12px;color:#9e9e9e"><span class="n" style="transform:scaleX(.865)">CC</span></div><div class="t" style="left:819px;top:82px;font-size:12px;color:#9e9e9e"><span class="n" style="transform:scaleX(.65)">ライブラリ</span></div>
<div class="t" style="left:872px;top:82px;font-size:12px;color:#f0f0f0"><span class="n" style="transform:scaleX(1)">挿入</span></div>
<div class="t" style="left:909px;top:82px;font-size:12px;color:#9e9e9e"><span class="n" style="transform:scaleX(.883)">CSS</span></div><div class="t" style="left:937px;top:82px;font-size:12px;color:#9e9e9e"><span class="n" style="transform:scaleX(.82)">デザイナー</span></div>
<div class="a" style="left:1030px;top:85px;width:11px;height:7px;background:repeating-linear-gradient(to bottom,#a6a6a6 0 1px,transparent 1px 2px)"></div>
<div class="a" style="left:755px;top:103px;width:151px;height:18px;background:#272727;border:1px solid #3c3c3c"></div>
<div class="t" style="left:763px;top:106px;font-size:12px;color:#dadada"><span class="n" style="transform:scaleX(.911)">Bootstrap</span></div><div class="t" style="left:814px;top:106px;font-size:12px;color:#dadada"><span class="n" style="transform:scaleX(.788)">のコンポーネント</span></div>
<svg class="a" style="left:891.500px;top:109px" width="10" height="7" viewBox="0 0 10 7"><path d="M1 1l4 4l4-4" fill="none" stroke="#c0c0c0" stroke-width="1.200"/></svg>
<div class="t ins" style="left:790px;top:131.5px"><span class="n" style="transform:scaleX(0.88)">Container</span></div>
<div class="t ins" style="left:790px;top:157.5px"><span class="n" style="transform:scaleX(0.9)">Container-fluid</span></div>
<div class="t ins" style="left:790px;top:183.5px"><span class="n" style="transform:scaleX(0.87)">Grid Row with column</span></div>
<div class="a" style="left:744px;top:215px;width:286px;height:1px;background:#373737"></div>
<div class="t ins" style="left:790px;top:235.5px"><span class="n" style="transform:scaleX(0.88)">Carousel</span></div>
<div class="t ins" style="left:790px;top:261.5px"><span class="n" style="transform:scaleX(0.88)">Cards</span></div>
<div class="a" style="left:744px;top:281px;width:281px;height:24px;background:#3a3a3a"></div>
<div class="a" style="left:778px;top:283px;width:1px;height:20px;background:#2d2d2d"></div>
<div class="t ins" style="left:790px;top:287.5px"><span class="n" style="transform:scaleX(0.907)">Responsive Image : Default</span></div>
<div class="t ins" style="left:790px;top:313.5px"><span class="n" style="transform:scaleX(0.88)">Media Object</span></div>
<div class="t ins" style="left:790px;top:339.5px"><span class="n" style="transform:scaleX(0.863)">Responsive Video Embed</span></div>
<div class="a" style="left:743px;top:360px;width:287px;height:13px;overflow:hidden"><div class="t ins" style="left:47px;top:4px"><span class="n" style="transform:scaleX(0.88)">Jumbotron</span></div></div>
<svg class="a" style="left:755px;top:129px" width="34" height="250" viewBox="0 0 34 250" fill="none" stroke="#e2e2e2" stroke-width="1.300">
 <!-- container y 130..144 => 2..16 -->
 <rect x="1.500" y="2.500" width="14" height="13"/><path d="M5.500 3v12M7.500 3v12M9.500 3v12M11.500 3v12" stroke-width="1"/>
 <!-- container-fluid 156..170 => 28..42 -->
 <rect x="1.500" y="28.500" width="14" height="13"/><path d="M3.500 29v12M5.500 29v12M7.500 29v12M9.500 29v12M11.500 29v12M13.500 29v12" stroke-width="1"/>
 <!-- grid row 182..196 => 54..68 -->
 <rect x="1.500" y="54.500" width="5" height="13" stroke-width="1.200"/><path d="M8 54.500h7.500v13h-7.500" stroke-dasharray="2 1.500" stroke-width="1.200"/><path d="M11.500 58.500v5M9 61h5" stroke-width="1.200"/>
 <g transform="translate(0,-0.8)"><!-- carousel 237..247 => 109..119 -->
 <rect x="1.600" y="109.600" width="15" height="9" rx="1"/><path d="M4.500 114h.1M6.800 115.500h.1M9 115.500h.1M11.200 115.500h.1M13.600 114h.1" stroke-width="1.600" stroke-linecap="round"/>
 <!-- cards 261..275 => 133..147 -->
 <rect x="1.600" y="133.600" width="13.800" height="13.400"/><rect x="1.600" y="133.600" width="13.800" height="3.400" fill="#e2e2e2"/><path d="M4 140.500h6M4 143.500h4" stroke-width="1.400"/>
 <!-- image 287..300 => 159..172 -->
 <rect x="1.600" y="159.600" width="13.800" height="11.800"/><path d="M2.500 170l3.500-4.500l2.500 2.500l2.500-3l3.600 5z" fill="#e2e2e2" stroke="none"/><circle cx="11.800" cy="163" r="1.100" fill="#e2e2e2" stroke="none"/>
 <!-- media obj 315..323 => 187..195 -->
 <rect x="2" y="189" width="4.600" height="4.600" stroke-width="1.200"/><path d="M9 189.500h6M9 193h4" stroke-width="1.400" stroke="#bdbdbd"/>
 <!-- video 339..351 => 211..223 -->
 <rect x="1.600" y="211.600" width="13.800" height="11"/><circle cx="8.500" cy="217" r="2.800" stroke-width="1"/><path d="M7.700 215.600v2.800l2.300-1.400z" fill="#e2e2e2" stroke="none"/>
 <!-- jumbotron 364.. => 236.. -->
 <rect x="1.600" y="236.600" width="13.800" height="11"/><path d="M3.500 240h10M3.500 243h10" stroke-width="1.300"/>
 </g><!-- dropdown arrows -->
 <path d="M23 138h6l-3 3.200zM23 190h6l-3 3.200z" fill="#a8a8a8" stroke="none"/><path d="M26 164h6l-3 3.200z" fill="#a8a8a8" stroke="none"/>
</svg>
<div class="a" style="left:743px;top:373px;width:304px;height:3px;background:#212121"></div>
<!-- insert scrollbar -->
<div class="a" style="left:1030px;top:98px;width:17px;height:275px;background:#2b2b2b"></div>
<div class="a" style="left:1031px;top:121px;width:16px;height:87px;border-radius:8px;background:#3f3f3f"></div>
<!-- red annotation -->
<div class="a" style="left:747.500px;top:277.500px;width:186px;height:33.500px;border:3px solid #ea1218;box-shadow:1px 1px 2px rgba(0,0,0,.5)"></div>

<!-- ===== right: DOM panel ===== -->
<div class="a" style="left:743px;top:376px;width:304px;height:18px;background:#272727"></div><div class="a" style="left:743px;top:376px;width:38px;height:18px;background:#303030"></div>
<div class="a" style="left:781px;top:376px;width:105px;height:18px;background:#262626"></div><div class="a" style="left:830px;top:376px;width:1px;height:17px;background:#1f1f1f"></div>
<div class="a" style="left:781px;top:393px;width:266px;height:1px;background:#262626"></div>
<div class="t" style="left:751px;top:379px;font-size:12px;color:#f2f2f2"><span class="n" style="transform:scaleX(.9)">DOM</span></div>
<div class="t" style="left:789px;top:379px;font-size:12px;color:#9e9e9e"><span class="n" style="transform:scaleX(.70)">アセット</span></div>
<div class="t" style="left:836px;top:379px;font-size:12px;color:#9e9e9e"><span class="n" style="transform:scaleX(.72)">スニペット</span></div>
<div class="a" style="left:1030px;top:382px;width:11px;height:7px;background:repeating-linear-gradient(to bottom,#a6a6a6 0 1px,transparent 1px 2px)"></div>
<div class="a" style="left:743px;top:394px;width:291px;height:265px;overflow:hidden"><div class="a" style="left:-743px;top:-394px;width:1052px;height:676px">
<svg class="a" style="left:829px;top:387px" width="7" height="10" viewBox="0 0 7 10"><path d="M1 1l4 4l-4 4" fill="none" stroke="#bdbdbd" stroke-width="1.200"/></svg><svg class="a" style="left:840px;top:386.5px" width="38" height="20" viewBox="-3 -1 38 20" fill="none" stroke="#8f8f8f" stroke-width="1.300"><path d="M-1 7v10.200h25l2.500-3"/><path d="M.700 .700h25.3l6 6.3l-6 6.3h-25.3z"/><path d="M.700 13.7h25.3" stroke-width="1.900"/></svg><div class="t dt" style="left:843px;width:28px;top:386.5px;text-align:center"><span class="n" style="transform:scaleX(.87);transform-origin:50% 50%">div</span></div><div class="t dc" style="left:878.5px;top:388px"><span class="n" style="transform:scaleX(.87)">#navBarSupportedContent1 .co</span></div>
<svg class="a" style="left:798px;top:415px" width="10" height="7" viewBox="0 0 10 7"><path d="M1 1l4 4l4-4" fill="none" stroke="#bdbdbd" stroke-width="1.200"/></svg><svg class="a" style="left:808px;top:410px" width="44.5" height="20" viewBox="-3 -1 44.5 20" fill="none" stroke="#8f8f8f" stroke-width="1.300"><path d="M.700 .700h31.8l6 6.3l-6 6.3h-31.8z"/><path d="M.700 13.7h31.8" stroke-width="1.900"/></svg><div class="t dt" style="left:811px;width:34.5px;top:410px;text-align:center"><span class="n" style="transform:scaleX(.87);transform-origin:50% 50%">main</span></div>
<svg class="a" style="left:812px;top:436px" width="7" height="10" viewBox="0 0 7 10"><path d="M1 1l4 4l-4 4" fill="none" stroke="#bdbdbd" stroke-width="1.200"/></svg><svg class="a" style="left:824.5px;top:433px" width="38.5" height="20" viewBox="-3 -1 38.5 20" fill="none" stroke="#8f8f8f" stroke-width="1.300"><path d="M-1 7v10.200h25.5l2.500-3"/><path d="M.700 .700h25.8l6 6.3l-6 6.3h-25.8z"/><path d="M.700 13.7h25.8" stroke-width="1.900"/></svg><div class="t dt" style="left:827.5px;width:28.5px;top:433px;text-align:center"><span class="n" style="transform:scaleX(.87);transform-origin:50% 50%">div</span></div><div class="t dc" style="left:866px;top:434px"><span class="n" style="transform:scaleX(.87)">#carouselExampleIndicators1 .carousel</span></div>
<svg class="a" style="left:824.5px;top:456px" width="34" height="20" viewBox="-3 -1 34 20" fill="none" stroke="#8f8f8f" stroke-width="1.300"><path d="M.700 .700h21.3l6 6.3l-6 6.3h-21.3z"/><path d="M.700 13.7h21.3" stroke-width="1.900"/></svg><div class="t dt" style="left:827.5px;width:24px;top:456px;text-align:center"><span class="n" style="transform:scaleX(.87);transform-origin:50% 50%">h1</span></div><div class="t dc" style="left:861.5px;top:457px"><span class="n" style="transform:scaleX(.87)">.text-center .h3 .pt-5</span></div>
<svg class="a" style="left:812px;top:482px" width="7" height="10" viewBox="0 0 7 10"><path d="M1 1l4 4l-4 4" fill="none" stroke="#bdbdbd" stroke-width="1.200"/></svg><svg class="a" style="left:824.5px;top:479px" width="28.5" height="20" viewBox="-3 -1 28.5 20" fill="none" stroke="#8f8f8f" stroke-width="1.300"><path d="M-1 7v10.200h15.5l2.500-3"/><path d="M.700 .700h15.8l6 6.3l-6 6.3h-15.8z"/><path d="M.700 13.7h15.8" stroke-width="1.900"/></svg><div class="t dt" style="left:827.5px;width:18.5px;top:479px;text-align:center"><span class="n" style="transform:scaleX(.87);transform-origin:50% 50%">p</span></div><div class="t dc" style="left:855px;top:480px"><span class="n" style="transform:scaleX(.87)">.text-center</span></div>
<svg class="a" style="left:824.5px;top:502px" width="34" height="20" viewBox="-3 -1 34 20" fill="none" stroke="#8f8f8f" stroke-width="1.300"><path d="M.700 .700h21.3l6 6.3l-6 6.3h-21.3z"/><path d="M.700 13.7h21.3" stroke-width="1.900"/></svg><div class="t dt" style="left:827.5px;width:24px;top:502px;text-align:center"><span class="n" style="transform:scaleX(.87);transform-origin:50% 50%">h2</span></div><div class="t dc" style="left:861.5px;top:503px"><span class="n" style="transform:scaleX(.87)">.text-center .h4 .pt-5</span></div>
<svg class="a" style="left:812px;top:530px" width="10" height="7" viewBox="0 0 10 7"><path d="M1 1l4 4l4-4" fill="none" stroke="#bdbdbd" stroke-width="1.200"/></svg><svg class="a" style="left:824.5px;top:525px" width="38.5" height="20" viewBox="-3 -1 38.5 20" fill="none" stroke="#8f8f8f" stroke-width="1.300"><path d="M.700 .700h25.8l6 6.3l-6 6.3h-25.8z"/><path d="M.700 13.7h25.8" stroke-width="1.900"/></svg><div class="t dt" style="left:827.5px;width:28.5px;top:525px;text-align:center"><span class="n" style="transform:scaleX(.87);transform-origin:50% 50%">div</span></div><div class="t dc" style="left:865.5px;top:526px"><span class="n" style="transform:scaleX(.87)">.container-fluid</span></div>
<svg class="a" style="left:829px;top:553px" width="10" height="7" viewBox="0 0 10 7"><path d="M1 1l4 4l4-4" fill="none" stroke="#bdbdbd" stroke-width="1.200"/></svg><svg class="a" style="left:840.5px;top:548px" width="38" height="20" viewBox="-3 -1 38 20" fill="none" stroke="#8f8f8f" stroke-width="1.300"><path d="M.700 .700h25.3l6 6.3l-6 6.3h-25.3z"/><path d="M.700 13.7h25.3" stroke-width="1.900"/></svg><div class="t dt" style="left:843.5px;width:28px;top:548px;text-align:center"><span class="n" style="transform:scaleX(.87);transform-origin:50% 50%">div</span></div><div class="t dc" style="left:880px;top:549px"><span class="n" style="transform:scaleX(.87)">.row</span></div>
<div class="a" style="left:744px;top:569px;width:290px;height:21px;background:#2c4668"></div>
<svg class="a" style="left:855px;top:571px" width="37.5" height="20" viewBox="-3 -1 37.5 20" fill="none" stroke="#8f8f8f" stroke-width="1.300"><path d="M.700 .700h24.8l6 6.3l-6 6.3h-24.8z"/><path d="M.700 13.7h24.8" stroke-width="1.900"/></svg><div class="t dt" style="left:858px;width:27.5px;top:571px;text-align:center"><span class="n" style="transform:scaleX(.87);transform-origin:50% 50%">div</span></div><div class="t dc" style="left:895px;top:572px"><span class="n" style="transform:scaleX(.87)">.col-sm-3</span></div>
<svg class="a" style="left:855px;top:594px" width="37.5" height="20" viewBox="-3 -1 37.5 20" fill="none" stroke="#8f8f8f" stroke-width="1.300"><path d="M.700 .700h24.8l6 6.3l-6 6.3h-24.8z"/><path d="M.700 13.7h24.8" stroke-width="1.900"/></svg><div class="t dt" style="left:858px;width:27.5px;top:594px;text-align:center"><span class="n" style="transform:scaleX(.87);transform-origin:50% 50%">div</span></div><div class="t dc" style="left:895px;top:595px"><span class="n" style="transform:scaleX(.87)">.col-sm-3</span></div>
<svg class="a" style="left:855px;top:617px" width="37.5" height="20" viewBox="-3 -1 37.5 20" fill="none" stroke="#8f8f8f" stroke-width="1.300"><path d="M.700 .700h24.8l6 6.3l-6 6.3h-24.8z"/><path d="M.700 13.7h24.8" stroke-width="1.900"/></svg><div class="t dt" style="left:858px;width:27.5px;top:617px;text-align:center"><span class="n" style="transform:scaleX(.87);transform-origin:50% 50%">div</span></div><div class="t dc" style="left:895px;top:618px"><span class="n" style="transform:scaleX(.87)">.col-sm-3</span></div>
<svg class="a" style="left:855px;top:640px" width="37.5" height="20" viewBox="-3 -1 37.5 20" fill="none" stroke="#8f8f8f" stroke-width="1.300"><path d="M.700 .700h24.8l6 6.3l-6 6.3h-24.8z"/><path d="M.700 13.7h24.8" stroke-width="1.900"/></svg><div class="t dt" style="left:858px;width:27.5px;top:640px;text-align:center"><span class="n" style="transform:scaleX(.87);transform-origin:50% 50%">div</span></div><div class="t dc" style="left:895px;top:641px"><span class="n" style="transform:scaleX(.87)">.col-sm-3</span></div>
</div></div>
<svg class="a" style="left:747px;top:571px" width="17" height="16" viewBox="0 0 17 16"><path d="M7 1.500v12M1 7.500h12" stroke="#f4f4f4" stroke-width="2"/><path d="M16 15v-3.500l-3.500 3.500z" fill="#d0d0d0"/></svg>
<!-- DOM scrollbars -->
<div class="a" style="left:1034px;top:394px;width:13px;height:265px;background:#2a2a2a"></div>
<div class="a" style="left:1036px;top:496px;width:9px;height:128px;border-radius:4.500px;background:#434343"></div>
<div class="a" style="left:743px;top:659px;width:304px;height:12px;background:#2a2a2a"></div>
<div class="a" style="left:745px;top:661px;width:180px;height:9px;border-radius:4.500px;background:#434343"></div>
<!-- outer frame right/bottom -->
<div class="a" style="left:1047px;top:35px;width:1px;height:637px;background:#222"></div>

</body>
</html>
